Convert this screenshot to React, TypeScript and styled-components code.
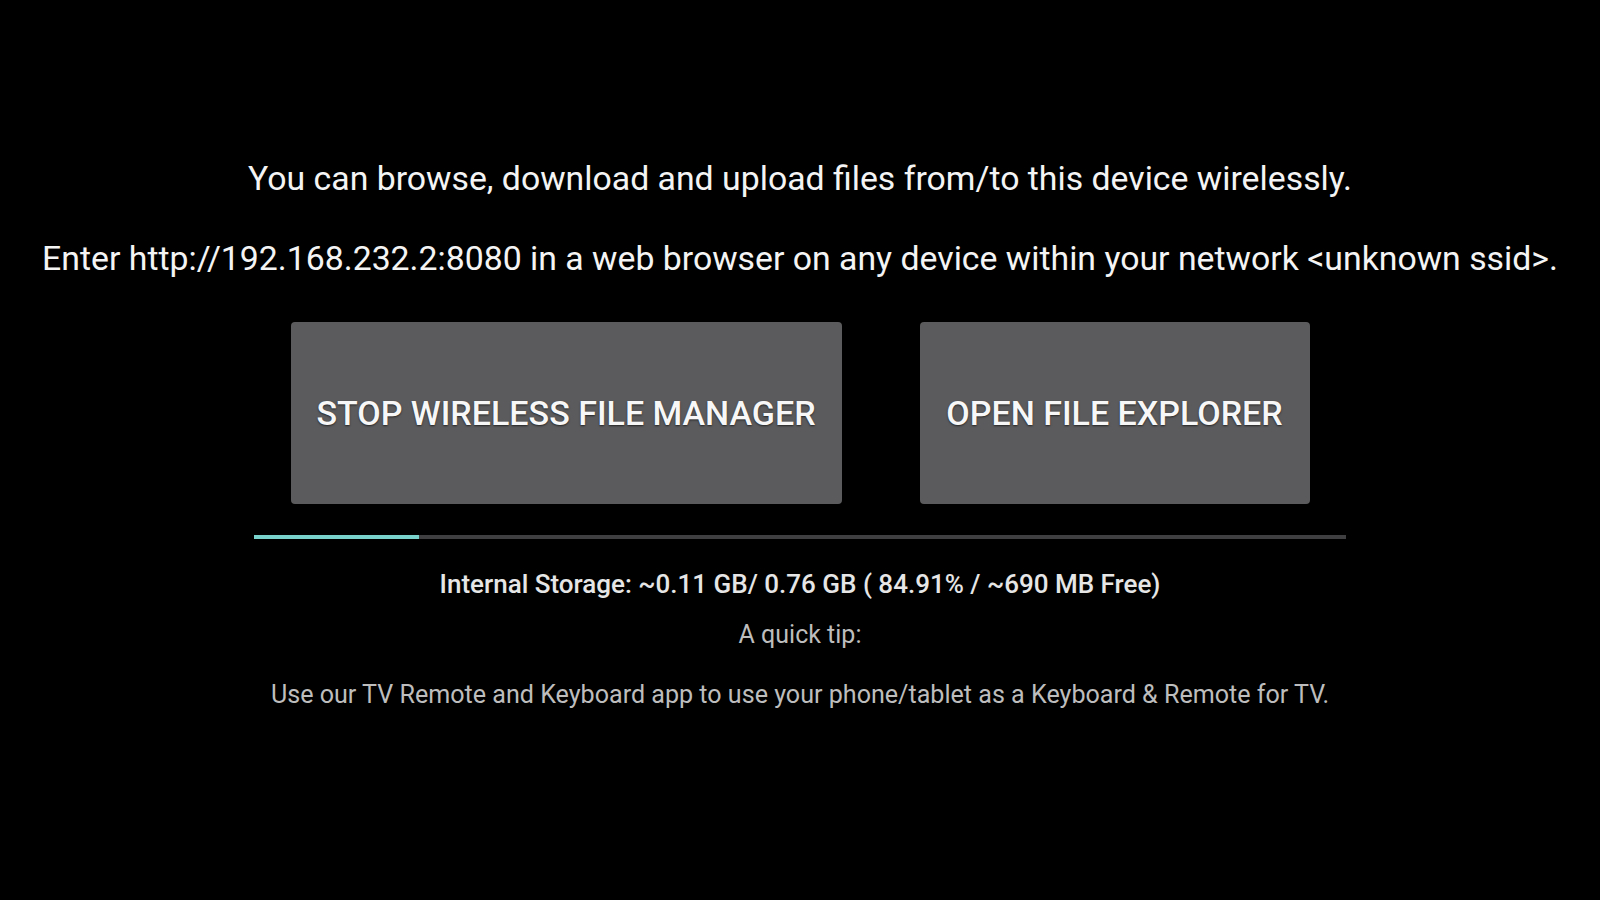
import React from "react";
import styled, { createGlobalStyle } from "styled-components";

const Global = createGlobalStyle`
  html, body { margin: 0; padding: 0; background: #000; }
  body { font-family: Roboto, "Liberation Sans", sans-serif; }
`;

const Screen = styled.main`
  width: 1600px;
  height: 900px;
  background: #000;
  display: flex;
  flex-direction: column;
  align-items: center;
  padding-top: 159px;
  box-sizing: border-box;
`;

const Message = styled.p<{ $mt?: number }>`
  margin: ${(p) => p.$mt ?? 0}px 0 0;
  font-size: 33.8px;
  line-height: 40px;
  color: #f4f4f4;
  white-space: nowrap;
`;

const ButtonRow = styled.div`
  display: flex;
  gap: 78px;
  margin-top: 43px;
`;

const ActionButton = styled.button<{ $w: number }>`
  width: ${(p) => p.$w}px;
  height: 182px;
  background: #5b5b5d;
  border: none;
  border-radius: 4px;
  color: #f7f7f7;
  font-family: Roboto, "Liberation Sans", sans-serif;
  font-weight: 500;
  font-size: 34px;
  letter-spacing: 0;
  text-shadow: 0 1px 2px rgba(0, 0, 0, 0.6);
  padding: 0;
  cursor: pointer;
  box-shadow: 0 1px 3px rgba(0, 0, 0, 0.5);
`;

const Track = styled.div`
  width: 1092px;
  height: 4px;
  background: #3f3f41;
  margin-top: 31px;
  display: flex;
`;

const Fill = styled.div`
  height: 100%;
  background: #79d2cb;
`;

const Storage = styled.p`
  margin: 30px 0 0;
  font-size: 26px;
  font-weight: 500;
  line-height: 30px;
  color: #e6e6e6;
  white-space: nowrap;
`;

const TipTitle = styled.p`
  margin: 21px 0 0;
  font-size: 25px;
  line-height: 30px;
  color: #bdbdbd;
`;

const TipText = styled.p`
  margin: 30px 0 0;
  font-size: 25.1px;
  line-height: 30px;
  color: #bdbdbd;
  white-space: nowrap;
`;

export default function App() {
  const usedPercent = 100 - 84.91;
  return (
    <>
      <Global />
      <Screen>
        <Message>You can browse, download and upload files from/to this device wirelessly.</Message>
        <Message $mt={40}>
          Enter http://192.168.232.2:8080 in a web browser on any device within your network &lt;unknown ssid&gt;.
        </Message>
        <ButtonRow>
          <ActionButton $w={551}>STOP WIRELESS FILE MANAGER</ActionButton>
          <ActionButton $w={390}>OPEN FILE EXPLORER</ActionButton>
        </ButtonRow>
        <Track>
          <Fill style={{ width: `${usedPercent}%` }} />
        </Track>
        <Storage>Internal Storage: ~0.11 GB/ 0.76 GB ( 84.91% / ~690 MB Free)</Storage>
        <TipTitle>A quick tip:</TipTitle>
        <TipText>Use our TV Remote and Keyboard app to use your phone/tablet as a Keyboard &amp; Remote for TV.</TipText>
      </Screen>
    </>
  );
}
